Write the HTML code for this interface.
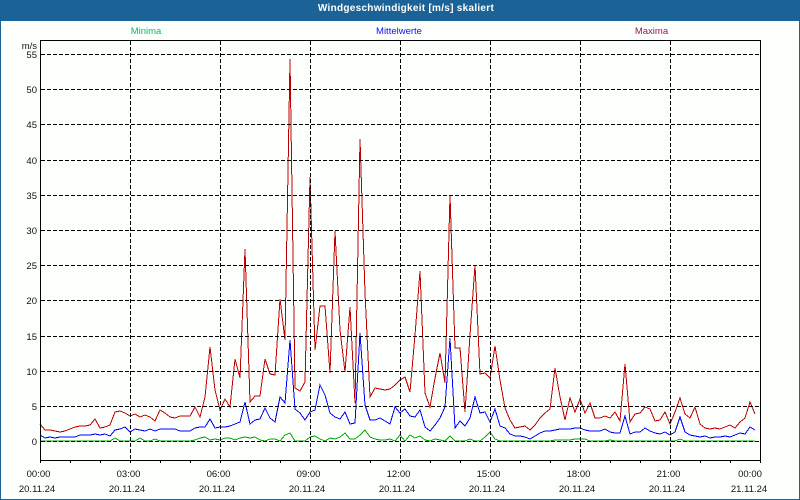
<!DOCTYPE html>
<html><head><meta charset="utf-8"><style>
html,body{margin:0;padding:0;width:800px;height:500px;overflow:hidden;background:#fff}
svg{display:block}
text{font-family:"Liberation Sans",sans-serif;font-size:9.5px;fill:#111}
</style></head><body>
<svg width="800" height="500" viewBox="0 0 800 500" xmlns="http://www.w3.org/2000/svg">
<rect width="800" height="500" fill="#1b6296"/>
<rect x="1" y="21" width="798" height="478" fill="#fdfffd"/>
<text x="406" y="11" text-anchor="middle" style="font-size:10px;font-weight:bold;fill:#fff;letter-spacing:.28px">Windgeschwindigkeit [m/s] skaliert</text>
<text x="146" y="34" text-anchor="middle" style="fill:#00c060">Minima</text>
<text x="399" y="34" text-anchor="middle" style="fill:#1010f0">Mittelwerte</text>
<text x="651.5" y="34" text-anchor="middle" style="fill:#a01060">Maxima</text>
<g shape-rendering="crispEdges" fill="none" stroke-linejoin="miter">
<polyline stroke="#00aa00" points="40,441 110,441 115,438 120,441 135,441 140,438 145,441 150,441 155,439 160,441 190,441 195,440 200,438 205,437 210,440 215,439 220,440 225,438 230,438 235,440 240,438 245,437 250,438 255,437 260,440 265,441 270,439 275,439 280,441 285,435 290,433 295,441 305,441 310,437 315,436 320,439 325,441 330,438 335,439 340,437 345,433 350,439 355,439 360,435 365,430 370,437 375,439 380,440 385,440 390,439 395,441 400,435 405,441 410,435 415,438 420,436 425,440 430,441 435,439 440,440 445,441 450,436 455,441 465,441 470,439 475,441 480,441 485,437 490,432 495,439 500,441 550,441 555,440 570,440 575,439 585,439 590,441 605,441 610,440 615,441 675,441 680,439 685,441 755,441"/>
<polyline stroke="#0000ff" points="40,435 45,438 50,437 55,438 60,437 65,437 70,437 75,437 80,435 85,435 90,435 95,434 100,435 105,434 110,436 115,430 120,429 125,427 130,432 135,429 140,430 145,431 150,429 155,431 160,429 165,429 170,429 175,429 180,431 185,431 190,431 195,428 200,427 205,427 210,419 215,428 220,427 225,427 230,426 235,424 240,422 245,402 250,424 255,420 260,419 265,408 270,418 275,422 280,397 285,403 290,340 295,409 300,413 305,420 310,412 315,410 320,385 325,395 330,413 335,417 340,419 345,412 350,424 355,423 360,333 365,405 370,420 375,420 380,418 385,421 390,424 395,407 400,413 405,409 410,416 415,417 420,410 425,427 430,431 435,425 440,418 445,407 450,338 455,428 460,421 465,426 470,418 475,397 480,413 485,412 490,422 495,409 500,426 505,428 510,434 515,436 520,436 525,437 530,439 535,436 540,433 545,431 550,431 555,430 560,429 565,429 570,429 575,428 580,428 585,430 590,431 595,431 600,431 605,429 610,432 615,433 620,433 625,416 630,434 635,432 640,432 645,428 650,431 655,433 660,434 665,432 670,435 675,432 680,417 685,432 690,435 695,436 700,437 705,436 710,438 715,437 720,437 725,436 730,437 735,435 740,433 745,434 750,427 755,430"/>
<polyline stroke="#c00000" points="40,424 45,430 50,430 55,431 60,432 65,431 70,429 75,427 80,426 85,426 90,425 95,419 100,428 105,427 110,425 115,412 120,411 125,413 130,416 135,414 140,417 145,415 150,417 155,421 160,410 165,413 170,417 175,418 180,416 185,416 190,416 195,407 200,417 205,397 210,347 215,390 220,410 225,399 230,407 235,359 240,378 245,249 250,402 255,396 260,396 265,359 270,374 275,375 280,299 285,340 290,59 295,388 300,391 305,382 310,177 315,350 320,306 325,306 330,373 335,231 340,330 345,372 350,307 355,403 360,139 365,293 370,397 375,388 380,389 385,390 390,389 395,385 400,380 405,377 410,392 415,335 420,271 425,393 430,407 435,378 440,353 445,383 450,195 455,348 460,348 465,412 470,335 475,265 480,374 485,373 490,378 495,346 500,380 505,408 510,420 515,428 520,427 525,426 530,430 535,425 540,418 545,413 550,409 555,368 560,397 565,420 570,398 575,412 580,399 585,413 590,403 595,418 600,418 605,416 610,418 615,412 620,421 625,364 630,422 635,414 640,413 645,407 650,409 655,421 660,420 665,412 670,424 675,412 680,398 685,414 690,418 695,407 700,424 705,428 710,429 715,428 720,429 725,427 730,425 735,428 740,422 745,418 750,402 755,414"/>
<g stroke="#000" stroke-width="1" stroke-dasharray="4 2">
<path d="M41 54.5H760M41 89.5H760M41 124.5H760M41 160.5H760M41 195.5H760M41 230.5H760M41 265.5H760M41 300.5H760M41 336.5H760M41 371.5H760M41 406.5H760M41 441.5H760"/>
<path d="M130.5 41V460M220.5 41V460M310.5 41V460M400.5 41V460M490.5 41V460M580.5 41V460M670.5 41V460"/>
</g>
<rect x="40.5" y="40.5" width="720" height="420" stroke="#000"/>
<path stroke="#000" d="M40.5 461V463M70.5 461V463M100.5 461V463M130.5 461V463M160.5 461V463M190.5 461V463M220.5 461V463M250.5 461V463M280.5 461V463M310.5 461V463M340.5 461V463M370.5 461V463M400.5 461V463M430.5 461V463M460.5 461V463M490.5 461V463M520.5 461V463M550.5 461V463M580.5 461V463M610.5 461V463M640.5 461V463M670.5 461V463M700.5 461V463M730.5 461V463M760.5 461V463"/>
</g>
<g text-anchor="end">
<text x="37" y="49">m/s</text>
<text x="37" y="58">55</text><text x="37" y="93">50</text><text x="37" y="128">45</text><text x="37" y="164">40</text><text x="37" y="199">35</text><text x="37" y="234">30</text><text x="37" y="269">25</text><text x="37" y="304">20</text><text x="37" y="340">15</text><text x="37" y="375">10</text><text x="37" y="410">5</text><text x="37" y="445">0</text>
</g>
<g text-anchor="middle">
<text x="38.5" y="477">00:00</text><text x="128.5" y="477">03:00</text><text x="218.5" y="477">06:00</text><text x="308.5" y="477">09:00</text><text x="398.5" y="477">12:00</text><text x="488.5" y="477">15:00</text><text x="578.5" y="477">18:00</text><text x="668.5" y="477">21:00</text><text x="750" y="477">00:00</text>
<text x="37" y="492">20.11.24</text><text x="127" y="492">20.11.24</text><text x="217" y="492">20.11.24</text><text x="307" y="492">20.11.24</text><text x="397" y="492">20.11.24</text><text x="487" y="492">20.11.24</text><text x="577" y="492">20.11.24</text><text x="667" y="492">20.11.24</text><text x="749" y="492">21.11.24</text>
</g>
</svg>
</body></html>
